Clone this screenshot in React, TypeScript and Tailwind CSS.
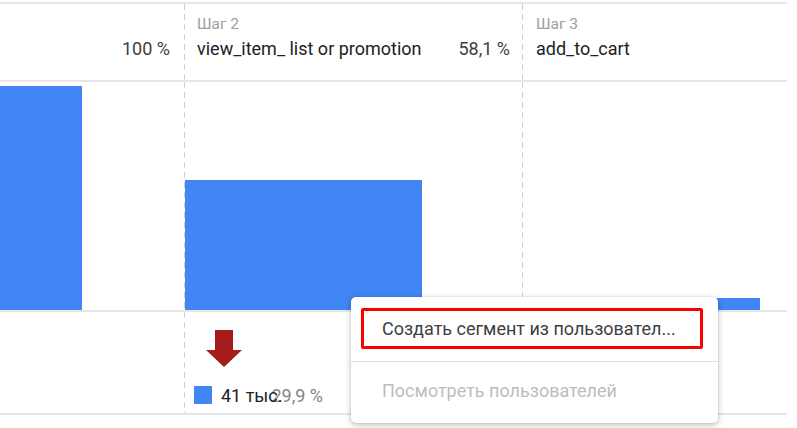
import React from 'react';

const dash = 'bg-[repeating-linear-gradient(to_bottom,#cfcfcf_0px,#cfcfcf_6px,transparent_6px,transparent_10px)]';

const Cell: React.FC<{ dashed?: boolean; className?: string; children?: React.ReactNode }> = ({ dashed, className = '', children }) => (
    <div className={`relative h-full ${className}`}>
        {dashed && <div className={`absolute left-0 top-0 h-full w-px ${dash}`} />}
        {children}
    </div>
);

const Menu: React.FC = () => (
    <div className="absolute left-[351px] top-[297px] w-[367px] h-[126px] bg-white rounded-[5px] shadow-[0_2px_6px_rgba(0,0,0,0.25),0_0_2px_rgba(0,0,0,0.12)] pt-[11px]">
        <div className="ml-[10px] mr-[15px] h-[41px] border-[3px] border-[#ff0000] rounded-[2px] flex items-center pl-[18px] text-[18px] text-[#3c4043]">
            Создать сегмент из пользовател...
        </div>
        <div className="mt-[12px] h-px bg-[#e0e0e0]" />
        <div className="pl-[31px] pt-[17px] text-[18px] leading-[24px] text-[#bdbdbd]">Посмотреть пользователей</div>
    </div>
);

const App: React.FC = () => {
    return (
        <div className="relative w-[797px] h-[428px] bg-white overflow-hidden font-['Roboto','Liberation_Sans',sans-serif]">
            <div className="w-[787px] pt-[2px]">
                <div className="border-t-2 border-[#e6e6e6]" />

                {/* header */}
                <div className="grid grid-cols-[184px_338px_265px] h-[78px] border-b-2 border-[#e6e6e6]">
                    <Cell className="flex items-start justify-end pr-[14px] pt-[33px]">
                        <span className="text-[18px] leading-[24px] text-[#3c4043]">100 %</span>
                    </Cell>
                    <Cell dashed className="pl-[13px] pt-[10px] pr-[12px]">
                        <div className="text-[15.5px] leading-[20px] text-[#9e9e9e]">Шаг 2</div>
                        <div className="flex justify-between text-[18px] leading-[24px] mt-[3px] text-[#202124]">
                            <span>view_item_ list or promotion</span>
                            <span className="text-[#3c4043]">58,1 %</span>
                        </div>
                    </Cell>
                    <Cell dashed className="pl-[14px] pt-[10px]">
                        <div className="text-[15.5px] leading-[20px] text-[#9e9e9e]">Шаг 3</div>
                        <div className="text-[18px] leading-[24px] mt-[3px] text-[#202124]">add_to_cart</div>
                    </Cell>
                </div>

                {/* chart */}
                <div className="grid grid-cols-[184px_338px_265px] h-[230px] border-b-2 border-[#e6e6e6]">
                    <Cell className="flex items-end">
                        <div className="w-[82px] h-[224px] bg-[#4285f4]" />
                    </Cell>
                    <Cell dashed className="flex items-end pl-px">
                        <div className="w-[237px] h-[130px] bg-[#4285f4]" />
                    </Cell>
                    <Cell dashed className="flex items-end pl-px">
                        <div className="w-[237px] h-[12px] bg-[#4285f4]" />
                    </Cell>
                </div>

                {/* bottom */}
                <div className="grid grid-cols-[184px_338px_265px] h-[103px] border-b-2 border-[#e6e6e6]">
                    <Cell />
                    <Cell dashed className="pl-[10px] pt-[18px]">
                        <svg width="38" height="38" viewBox="0 0 38 38" className="ml-[11px]">
                            <path d="M10 0 H28 V20 H37 L19 37 L1 20 H10 Z" fill="#a61b1b" />
                        </svg>
                        <div className="flex items-center mt-[18px] h-[18px] text-[18px]">
                            <div className="w-[18px] h-[18px] bg-[#4285f4]" />
                            <span className="ml-[9px] relative z-10 text-[#202124]">41 тыс.</span>
                            <span className="ml-[-11px] text-[#80868b]">29,9 %</span>
                        </div>
                    </Cell>
                    <Cell dashed />
                </div>
            </div>
            <Menu />
        </div>
    );
};

export default App;
